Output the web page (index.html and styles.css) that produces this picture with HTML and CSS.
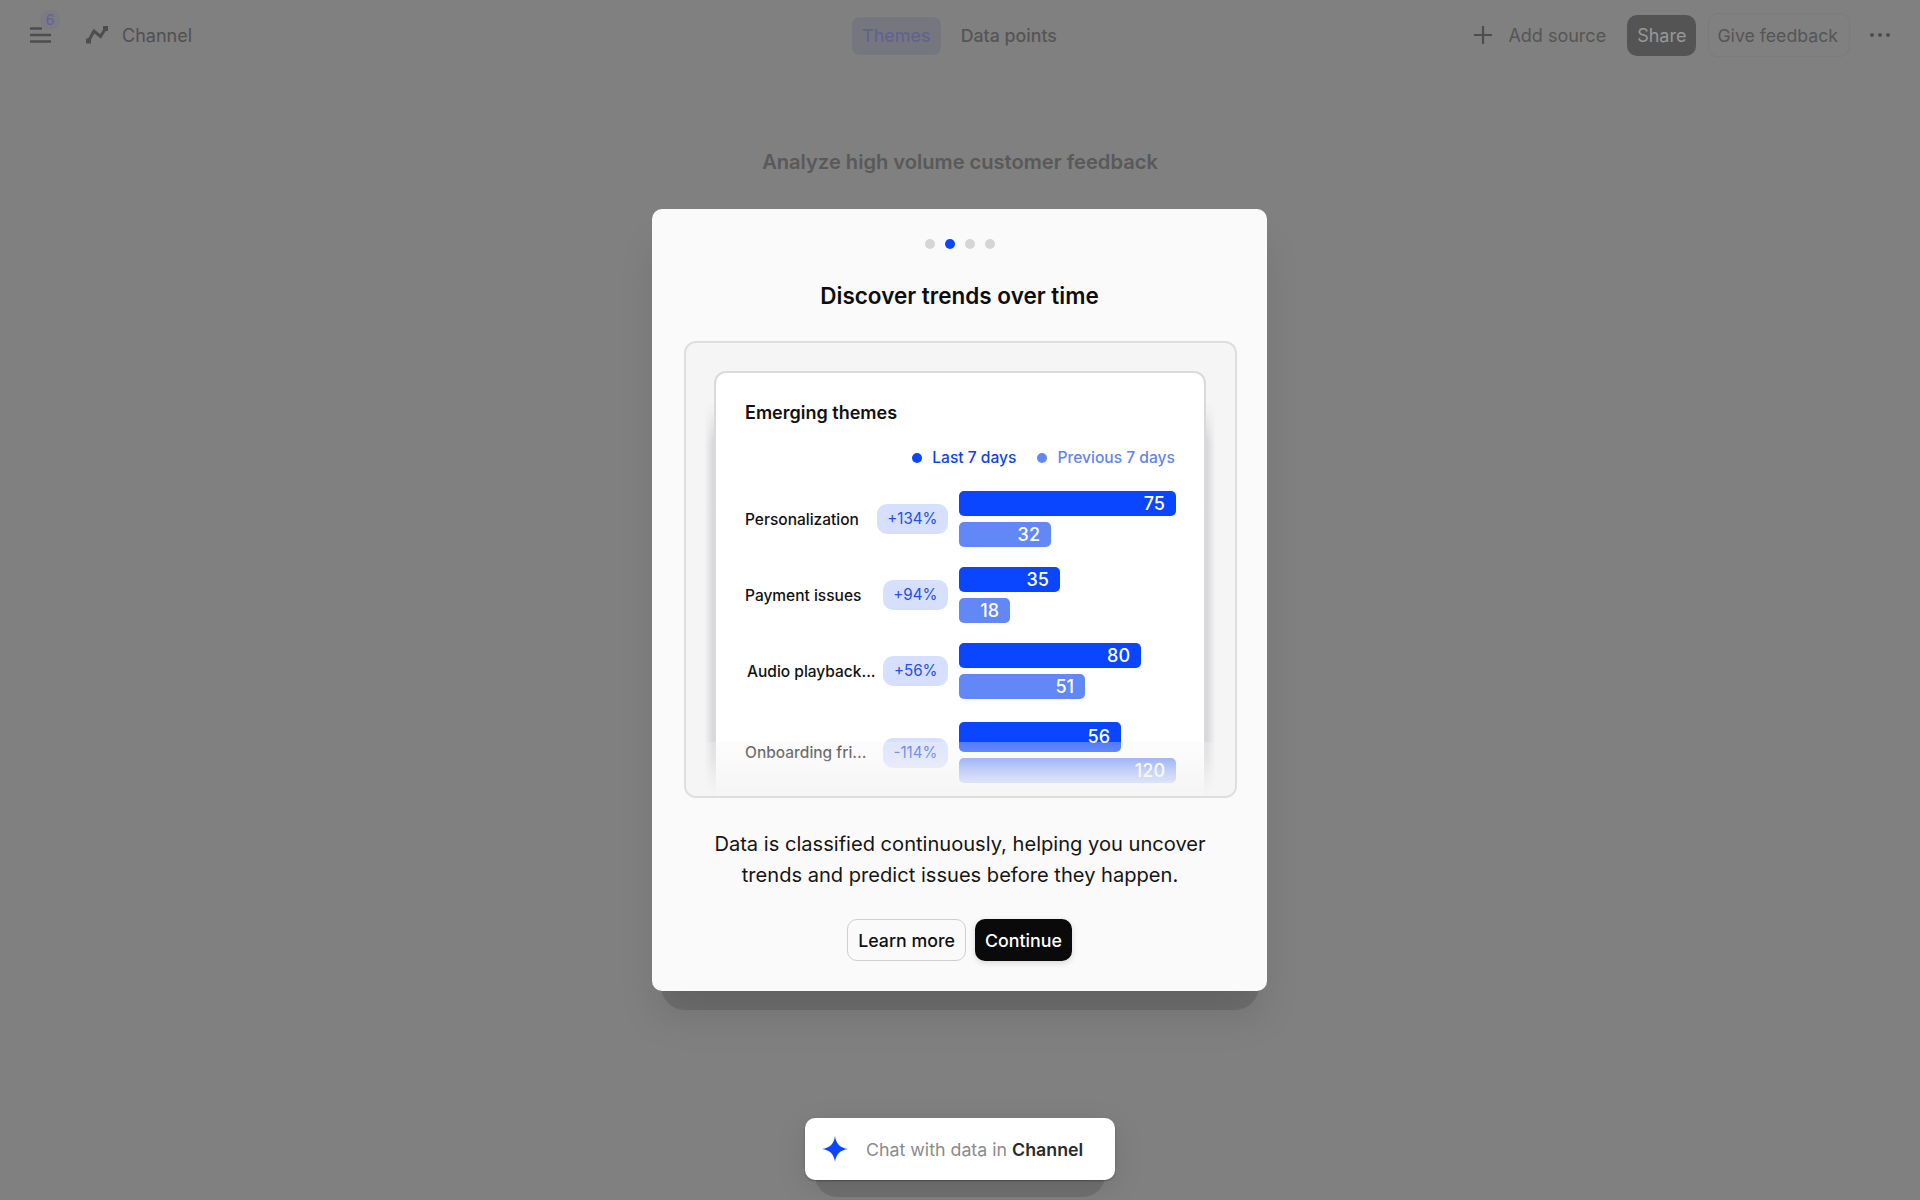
FILE: index.html
```html
<!DOCTYPE html>
<html lang="en">
<head>
<meta charset="utf-8">
<title>Channel</title>
<link rel="stylesheet" href="styles.css">
</head>
<body>
<header class="topbar">
  <div class="top-left">
    <div class="menu">
      <svg class="menu-icon" width="21" height="16" viewBox="0 0 21 16"><path d="M0 1.5h12M0 8h21M0 14.500h21" stroke="#4d4d4d" stroke-width="2.500" fill="none"/></svg>
      <span class="menu-badge">6</span>
    </div>
    <svg class="chart-icon" width="22" height="18" viewBox="0 0 22 18"><path d="M2.500 15 8 5 14.500 10.500 19.500 2.500" stroke="#4d4d4d" stroke-width="3" fill="none"/><path d="M0 12.500h5v5h-5zM17 0h5v5h-5z" fill="#4d4d4d"/></svg>
    <span class="workspace">Channel</span>
  </div>
  <nav class="tabs">
    <span class="tab tab-active">Themes</span>
    <span class="tab">Data points</span>
  </nav>
  <div class="top-right">
    <svg class="plus-icon" width="18" height="18" viewBox="0 0 18 18"><path d="M9 0v18M0 9h18" stroke="#4d4d4d" stroke-width="2.200" fill="none"/></svg>
    <span class="add-source">Add source</span>
    <span class="share">Share</span>
    <span class="feedback">Give feedback</span>
    <svg class="more-icon" width="20" height="4" viewBox="0 0 20 4"><circle cx="2" cy="2" r="2" fill="#4d4d4d"/><circle cx="10" cy="2" r="2" fill="#4d4d4d"/><circle cx="18" cy="2" r="2" fill="#4d4d4d"/></svg>
  </div>
</header>

<main class="stage">
  <h2 class="page-heading">Analyze high volume customer feedback</h2>

  <section class="modal">
    <div class="dots">
      <span class="dot"></span><span class="dot dot-on"></span><span class="dot"></span><span class="dot"></span>
    </div>
    <h1 class="modal-title">Discover trends over time</h1>

    <div class="frame">
      <div class="card">
        <h3 class="card-title">Emerging themes</h3>
        <div class="legend">
          <span class="legend-item legend-now">Last 7 days</span>
          <span class="legend-item legend-prev">Previous 7 days</span>
        </div>
        <div class="rows">
          <div class="row">
            <span class="label">Personalization</span><span class="badge">+134%</span>
            <div class="bars">
              <div class="bar bar-now" style="width:217px">75</div>
              <div class="bar bar-prev" style="width:92px">32</div>
            </div>
          </div>
          <div class="row">
            <span class="label">Payment issues</span><span class="badge">+94%</span>
            <div class="bars">
              <div class="bar bar-now" style="width:101px">35</div>
              <div class="bar bar-prev" style="width:51px">18</div>
            </div>
          </div>
          <div class="row">
            <span class="label label-indent">Audio playback...</span><span class="badge">+56%</span>
            <div class="bars">
              <div class="bar bar-now" style="width:182px">80</div>
              <div class="bar bar-prev" style="width:126px">51</div>
            </div>
          </div>
          <div class="row row-last">
            <span class="label">Onboarding fri...</span><span class="badge">-114%</span>
            <div class="bars">
              <div class="bar bar-now bar-tall" style="width:162px">56</div>
              <div class="bar bar-prev" style="width:217px">120</div>
            </div>
          </div>
        </div>
      </div>
    </div>

    <p class="modal-text">Data is classified continuously, helping you uncover<br>trends and predict issues before they happen.</p>

    <div class="actions">
      <button class="btn btn-ghost">Learn more</button>
      <button class="btn btn-solid">Continue</button>
    </div>
  </section>

  <div class="chat">
    <svg class="star" width="26" height="26" viewBox="0 0 26 26"><path d="M13 0C14 7.500 18 12 26 13 18 14 14 18.500 13 26 12 18.500 8 14 0 13 8 12 12 7.500 13 0Z" fill="#0a45ff"/></svg>
    <span class="chat-text">Chat with data in <b class="chat-name">Channel</b></span>
  </div>
</main>
</body>
</html>
```

FILE: styles.css
```css
* { box-sizing: border-box; }
html, body { margin: 0; padding: 0; }
body {
  width: 1920px;
  height: 1200px;
  overflow: hidden;
  background: #808080;
  font-family: Inter, "Liberation Sans", sans-serif;
  color: #4d4d4d;
}

/* Top bar */
.topbar {
  height: 70px;
  display: grid;
  grid-template-columns: 1fr auto 1fr;
  align-items: center;
  padding: 0 30px;
  font-size: 18px;
}
.top-left, .top-right { display: flex; align-items: center; }
.top-right { justify-content: flex-end; }
.menu { position: relative; width: 21px; height: 16px; display: flex; margin-right: 35px; }
.menu-badge {
  position: absolute;
  left: 10px;
  top: -17px;
  width: 20px;
  height: 20px;
  border-radius: 50%;
  background: #7b7b81;
  color: #62629a;
  font-size: 14px;
  line-height: 20px;
  text-align: center;
}
.chart-icon { margin-right: 14px; }
.workspace { color: #505050; }
.tabs { display: flex; align-items: center; gap: 9px; padding-top: 2px; }
.tab { padding: 0 11px; height: 38px; line-height: 38px; border-radius: 8px; color: #555; font-weight: 500; font-size: 17.800px; }
.tab-active { background: #76767f; color: #62628f; padding: 0 10px; }
.plus-icon { margin-right: 16px; }
.add-source { color: #555; margin-right: 21px; }
.share {
  height: 41px;
  line-height: 41px;
  padding: 0 10px;
  border-radius: 10px;
  background: #545454;
  color: #989898;
  margin-right: 12px;
}
.feedback {
  height: 44px;
  line-height: 44px;
  padding: 0 11px 0 8px;
  border: 1px solid #7b7b7b;
  border-radius: 10px;
  color: #555;
  font-size: 17.700px;
  margin-right: 20px;
}

/* Stage */
.stage { display: flex; flex-direction: column; align-items: center; }
.page-heading {
  margin: 79px 0 0;
  height: 26px;
  line-height: 26px;
  font-size: 20.100px;
  font-weight: 600;
  color: #595959;
}

/* Modal */
.modal {
  position: relative;
  margin: 34px 0 0 -1px;
  width: 615px;
  height: 782px;
  background: #fafafa;
  border-radius: 10px;
  display: flex;
  flex-direction: column;
  align-items: center;
  box-shadow: 0 33px 0 -32px #626262, 0 30px 40px -6px rgba(0, 0, 0, .12);
}
.modal::before {
  content: "";
  position: absolute;
  z-index: -1;
  left: 9px;
  right: 8px;
  top: 40px;
  bottom: -19px;
  border-radius: 24px;
  background: #707070;
}
.dots { display: flex; gap: 10px; margin-top: 30px; height: 10px; }
.dot { width: 10px; height: 10px; border-radius: 50%; background: #d5d5d5; }
.dot-on { background: #0a45ff; }
.modal-title { margin: 31px 0 0; height: 32px; line-height: 32px; font-size: 22.500px; font-weight: 600; color: #0d0d0d; }

.frame {
  position: relative;
  margin: 29px 0 0 2px;
  width: 553px;
  height: 457px;
  padding: 28px 29px 0 28px;
  overflow: hidden;
  background: #f5f5f6;
  border: 2px solid #dedede;
  border-radius: 12px;
}
.frame::before {
  content: "";
  position: absolute;
  left: 19px;
  right: 20px;
  top: 60px;
  bottom: 0;
  background: linear-gradient(to right, #f2f2f3 0, #d6d6da 9px, #d6d6da calc(100% - 9px), #f2f2f3 100%);
  -webkit-mask-image: linear-gradient(to bottom, transparent 0, #000 40px);
  mask-image: linear-gradient(to bottom, transparent 0, #000 40px);
}
.frame::after {
  content: "";
  position: absolute;
  left: 0;
  right: 0;
  bottom: 0;
  height: 54px;
  background: linear-gradient(to bottom, rgba(245, 245, 246, .3) 0, rgba(245, 245, 246, .45) 18px, rgba(245, 245, 246, .72) 32px, rgba(245, 245, 246, .96) 50px);
}
.card {
  position: relative;
  height: 440px;
  padding: 0 29px;
  background: #fff;
  border: 2px solid #dadada;
  border-bottom: 0;
  border-radius: 12px 12px 0 0;
}
.card-title { margin: 28px 0 0; height: 24px; line-height: 24px; font-size: 18px; font-weight: 600; color: #111; }
.legend { display: flex; justify-content: flex-end; gap: 21px; margin-top: 22px; height: 22px; font-size: 15.600px; font-weight: 500; line-height: 22px; }
.legend-item { display: flex; align-items: center; gap: 10px; }
.legend-item::before { content: ""; width: 10px; height: 10px; border-radius: 50%; }
.legend-now { color: #0f45e6; }
.legend-now::before { background: #0a45ff; }
.legend-prev { color: #6285ec; }
.legend-prev::before { background: #6288f8; }

.rows { display: flex; flex-direction: column; gap: 20px; margin-top: 22px; margin-right: -1px; }
.row { display: flex; align-items: center; }
.row-last { margin-top: 3px; }
.label { font-size: 15.500px; font-weight: 500; color: #111; white-space: nowrap; }
.label-indent { margin-left: 2px; }
.badge {
  margin-left: auto;
  height: 30px;
  line-height: 30px;
  padding: 0 10.500px;
  border-radius: 10px;
  background: #d6dffd;
  color: #2450e0;
  font-size: 15.200px;
}
.bars { width: 217px; margin-left: 11px; display: flex; flex-direction: column; gap: 6px; flex: none; }
.bar {
  height: 25px;
  line-height: 25px;
  padding-right: 11px;
  border-radius: 5px;
  color: #fff;
  font-size: 18px;
  font-weight: 500;
  text-align: right;
}
.bar-now { background: #0a45ff; }
.bar-prev { background: #6288f8; }
.bar-tall { height: 30px; line-height: 30px; }

.modal-text { margin: 31px 0 0 1px; text-align: center; font-size: 20.100px; line-height: 31px; color: #151515; }
.actions { display: flex; align-items: center; gap: 9px; margin-top: 28px; }
.btn { font: 450 17.800px Inter, "Liberation Sans", sans-serif; height: 42px; border-radius: 10px; padding: 0 10px; }
.btn-ghost { background: #fafafa; border: 1px solid #cfcfcf; color: #111; }
.btn-solid { background: #0a0a0a; border: 0; color: #fff; box-shadow: 0 2px 6px rgba(0, 0, 0, .14); }

/* Chat */
.chat {
  position: relative;
  margin-top: 127px;
  width: 310px;
  height: 62px;
  padding-left: 17px;
  display: flex;
  align-items: center;
  gap: 18px;
  background: #fff;
  border-radius: 10px;
  box-shadow: 0 1px 2px rgba(0, 0, 0, .3), 0 8px 30px rgba(0, 0, 0, .1);
  font-size: 17.800px;
}
.chat::before {
  content: "";
  position: absolute;
  z-index: -1;
  left: 10px;
  right: 10px;
  top: 20px;
  bottom: -17px;
  border-radius: 22px;
  background: #707070;
}
.chat-text { color: #8a8a8a; white-space: nowrap; }
.chat-name { color: #2a2a2a; font-weight: 600; }
```
